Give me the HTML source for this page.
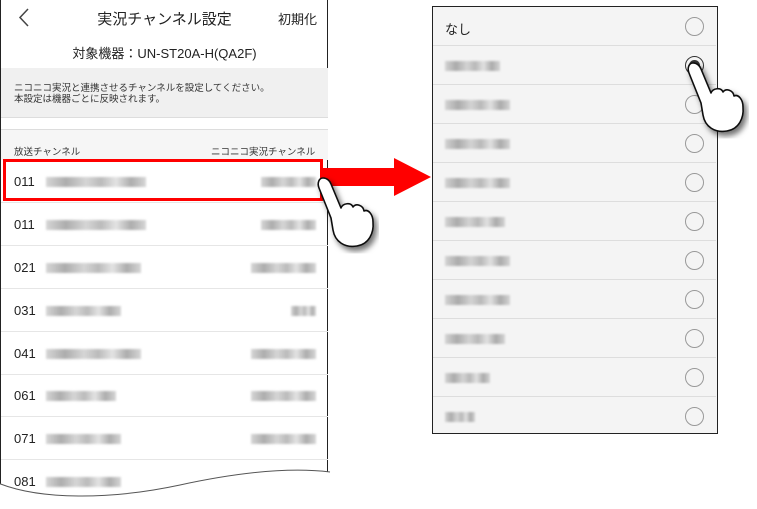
<!DOCTYPE html>
<html><head><meta charset="utf-8"><style>
*{margin:0;padding:0;box-sizing:border-box}
body{width:757px;height:509px;background:#fff;position:relative;overflow:hidden;font-family:"Liberation Sans","Noto Sans CJK JP",sans-serif;color:#222}
.abs{position:absolute}
.phone{left:0;top:0;width:328px;height:509px;border-right:1.5px solid #222;border-left:1px solid #222;background:#fff}
.blur{position:absolute;height:10px;background:linear-gradient(90deg,#ccc,#999 20%,#ccc 40%,#aaa 55%,#ddd 70%,#999 85%,#ccc);filter:blur(1px);opacity:.8}
.row{position:absolute;left:0;width:327px;height:43px;border-bottom:1px solid #e6e6e6}
.num{position:absolute;left:13px;font-size:13px;top:14px}
.rp{left:432px;top:6px;width:286px;height:428px;border:1.5px solid #222;background:#f4f4f4}
.rr{position:absolute;left:0;width:283px;height:39px;border-bottom:1px solid #ddd}
.radio{position:absolute;left:252px;top:10px;width:19px;height:19px;border:1.3px solid #999;border-radius:50%}
</style></head><body>
<div class="abs phone">
 <svg class="abs" style="left:0;top:0" width="40" height="36"><polyline points="27,9 19,17.5 27,26" fill="none" stroke="#444" stroke-width="1.5"/></svg>
 <div class="abs" style="left:0;width:327px;top:8px;text-align:center;font-size:15px">実況チャンネル設定</div>
 <div class="abs" style="left:277px;top:9px;font-size:13px">初期化</div>
 <div class="abs" style="left:0;width:327px;top:43px;text-align:center;font-size:13px">対象機器：UN-ST20A-H(QA2F)</div>
 <div class="abs" style="left:0;top:68px;width:327px;height:50px;background:#f0f0f0;border-bottom:1px solid #ddd;font-size:9.5px;line-height:11px;padding:15px 0 0 13px;color:#333">ニコニコ実況と連携させるチャンネルを設定してください。<br>本設定は機器ごとに反映されます。</div>
 <div class="abs" style="left:0;top:118px;width:327px;height:12px;background:#fff;border-bottom:1px solid #ddd"></div>
 <div class="abs" style="left:0;top:130px;width:327px;height:30px;background:#f6f6f6"></div>
 <div class="abs" style="left:13px;top:144px;font-size:9.5px;color:#333">放送チャンネル</div>
 <div class="abs" style="left:210px;top:144px;font-size:9.5px;color:#333">ニコニコ実況チャンネル</div>
 <div class="row" style="top:160px"><span class="num">011</span><div class="blur" style="left:45px;top:17px;width:100px"></div><div class="blur" style="left:260px;top:17px;width:55px"></div></div>
 <div class="row" style="top:203px"><span class="num">011</span><div class="blur" style="left:45px;top:17px;width:100px"></div><div class="blur" style="left:260px;top:17px;width:55px"></div></div>
 <div class="row" style="top:246px"><span class="num">021</span><div class="blur" style="left:45px;top:17px;width:95px"></div><div class="blur" style="left:250px;top:17px;width:65px"></div></div>
 <div class="row" style="top:289px"><span class="num">031</span><div class="blur" style="left:45px;top:17px;width:75px"></div><div class="blur" style="left:290px;top:17px;width:25px"></div></div>
 <div class="row" style="top:332px"><span class="num">041</span><div class="blur" style="left:45px;top:17px;width:95px"></div><div class="blur" style="left:250px;top:17px;width:65px"></div></div>
 <div class="row" style="top:374px"><span class="num">061</span><div class="blur" style="left:45px;top:17px;width:70px"></div><div class="blur" style="left:250px;top:17px;width:65px"></div></div>
 <div class="row" style="top:417px"><span class="num">071</span><div class="blur" style="left:45px;top:17px;width:75px"></div><div class="blur" style="left:250px;top:17px;width:65px"></div></div>
 <div class="row" style="top:460px;border:none"><span class="num">081</span><div class="blur" style="left:45px;top:17px;width:75px"></div></div>
</div>
<svg class="abs" style="left:0;top:0" width="757" height="509">
 <path d="M-2,483 C40,500 110,500 180,485 C240,472 290,467 330,472 L330,509 L-2,509 Z" fill="#fff"/>
 <path d="M-2,483 C40,500 110,500 180,485 C240,472 290,467 330,472" fill="none" stroke="#555" stroke-width="1"/>
 <rect x="4.5" y="160.5" width="317" height="39" fill="none" stroke="#f00" stroke-width="3"/>
 <path d="M322,168 L394,168 L394,158 L431,177 L394,196 L394,186 L322,186 Z" fill="#f00"/>
</svg>
<div class="abs rp">
 <div class="rr" style="top:0"><span class="abs" style="left:12px;top:12px;font-size:13px">なし</span><div class="radio"></div></div>
 <div class="rr" style="top:39px"><div class="blur" style="left:12px;top:15px;width:55px"></div><div class="radio" style="border:1.5px solid #333"><div style="position:absolute;left:2.5px;top:2.5px;width:11px;height:11px;border-radius:50%;background:#333"></div></div></div>
 <div class="rr" style="top:78px"><div class="blur" style="left:12px;top:15px;width:65px"></div><div class="radio"></div></div>
 <div class="rr" style="top:117px"><div class="blur" style="left:12px;top:15px;width:65px"></div><div class="radio"></div></div>
 <div class="rr" style="top:156px"><div class="blur" style="left:12px;top:15px;width:65px"></div><div class="radio"></div></div>
 <div class="rr" style="top:195px"><div class="blur" style="left:12px;top:15px;width:60px"></div><div class="radio"></div></div>
 <div class="rr" style="top:234px"><div class="blur" style="left:12px;top:15px;width:65px"></div><div class="radio"></div></div>
 <div class="rr" style="top:273px"><div class="blur" style="left:12px;top:15px;width:65px"></div><div class="radio"></div></div>
 <div class="rr" style="top:312px"><div class="blur" style="left:12px;top:15px;width:60px"></div><div class="radio"></div></div>
 <div class="rr" style="top:351px"><div class="blur" style="left:12px;top:15px;width:45px"></div><div class="radio"></div></div>
 <div class="rr" style="top:390px;border:none"><div class="blur" style="left:12px;top:15px;width:30px"></div><div class="radio"></div></div>
</div>
<svg class="abs" style="left:0;top:0" width="757" height="509">
 <defs><filter id="sh2"><feDropShadow dx="3" dy="4" stdDeviation="3" flood-opacity=".55"/></filter>
 <path id="hp" d="M2,0 C6,0 9,3 10,6 L20,30 C22,25 30,24 32,29 C35,25 42,27 43,33 C47,31 52,36 52,44 C53,55 48,66 36,68 C24,70 14,64 12,52 L10,40 L-2,10 C-4,5 -2,0 2,0 Z" fill="#fff" stroke="#111" stroke-width="1.6" stroke-linejoin="round"/></defs>
 <g filter="url(#sh2)" transform="translate(321,178)"><use href="#hp"/></g>
 <g filter="url(#sh2)" transform="translate(691,63)"><use href="#hp"/></g>
</svg>
</body></html>
